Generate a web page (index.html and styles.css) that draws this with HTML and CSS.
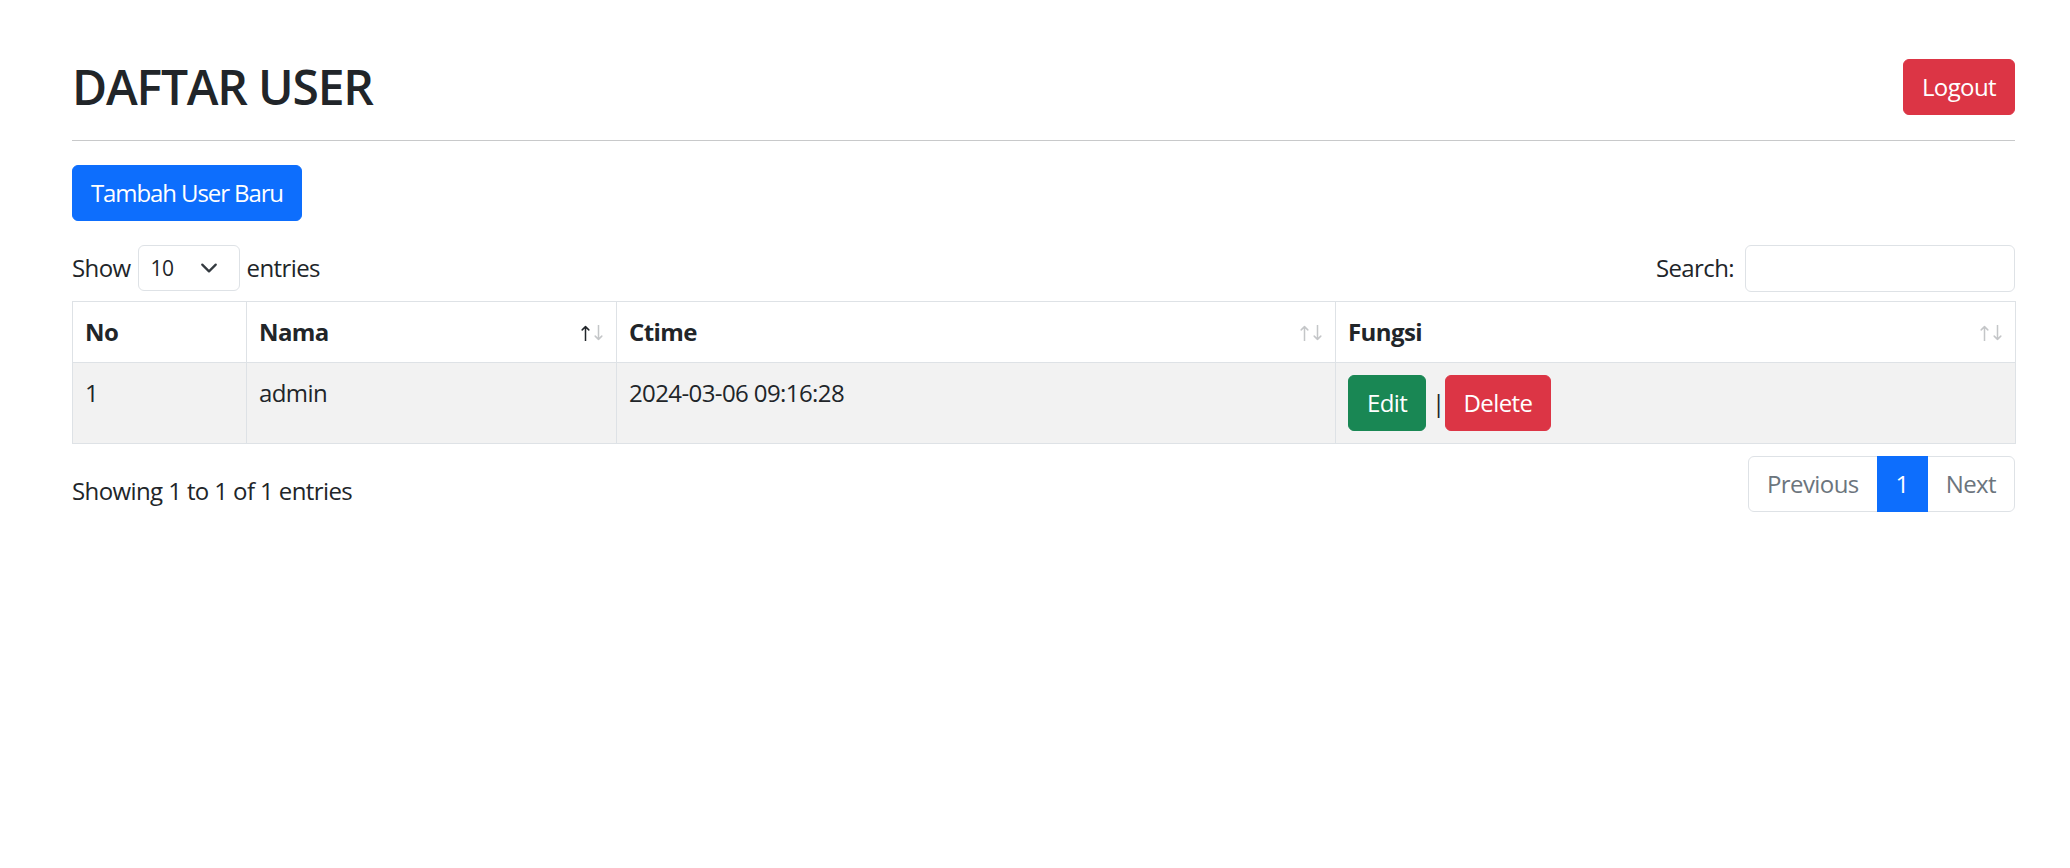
FILE: index.html
```html
<!DOCTYPE html>
<html lang="id">
<head>
<meta charset="utf-8">
<title>Daftar User</title>
<link rel="stylesheet" href="styles.css">
</head>
<body>
<div class="container">
  <div class="page-header">
    <h2 class="page-title">DAFTAR USER</h2>
    <a class="btn btn-danger" href="#">Logout</a>
  </div>
  <hr class="divider">
  <div class="toolbar">
    <a class="btn btn-primary" href="#">Tambah User Baru</a>
  </div>
  <div class="dt-top">
    <label class="dt-length">
      <span>Show</span>
      <span class="select-sm"><span>10</span><svg class="chevron" width="24" height="18" viewBox="0 0 16 16"><path d="m2 5 6 6 6-6" fill="none" stroke="#343a40" stroke-width="2" stroke-linecap="round" stroke-linejoin="round"/></svg></span>
      <span>entries</span>
    </label>
    <label class="dt-search">
      <span>Search:</span>
      <input type="search" class="input-sm">
    </label>
  </div>
  <table class="data-table">
    <colgroup>
      <col class="col-no">
      <col class="col-nama">
      <col class="col-ctime">
      <col class="col-fungsi">
    </colgroup>
    <thead>
      <tr>
        <th><div class="th-inner"><span>No</span></div></th>
        <th><div class="th-inner"><span>Nama</span><svg class="sort sort-asc" width="22" height="16" viewBox="0 0 22 16"><path class="up" d="M4.5 16V1.6M1.2 4.9 4.5 1.6 7.8 4.9"/><path class="down" d="M17.5 0v14.4M14.2 11.1l3.3 3.3 3.3-3.3"/></svg></div></th>
        <th><div class="th-inner"><span>Ctime</span><svg class="sort" width="22" height="16" viewBox="0 0 22 16"><path class="up" d="M4.5 16V1.6M1.2 4.9 4.5 1.6 7.8 4.9"/><path class="down" d="M17.5 0v14.4M14.2 11.1l3.3 3.3 3.3-3.3"/></svg></div></th>
        <th><div class="th-inner"><span>Fungsi</span><svg class="sort" width="22" height="16" viewBox="0 0 22 16"><path class="up" d="M4.5 16V1.6M1.2 4.9 4.5 1.6 7.8 4.9"/><path class="down" d="M17.5 0v14.4M14.2 11.1l3.3 3.3 3.3-3.3"/></svg></div></th>
      </tr>
    </thead>
    <tbody>
      <tr class="odd">
        <td>1</td>
        <td>admin</td>
        <td>2024-03-06 09:16:28</td>
        <td><a class="btn btn-success" href="#">Edit</a> <span class="sep">|</span> <a class="btn btn-danger" href="#">Delete</a></td>
      </tr>
    </tbody>
  </table>
  <div class="dt-bottom">
    <div class="dt-info">Showing 1 to 1 of 1 entries</div>
    <ul class="pagination">
      <li class="page-item disabled"><span class="page-link">Previous</span></li>
      <li class="page-item active"><span class="page-link">1</span></li>
      <li class="page-item disabled"><span class="page-link">Next</span></li>
    </ul>
  </div>
</div>
</body>
</html>
```
FILE: styles.css
```css
* {
  box-sizing: border-box;
}

html,
body {
  margin: 0;
  padding: 0;
  background: #ffffff;
}

body {
  font-family: "Open Sans", "Noto Sans", "DejaVu Sans", sans-serif;
  font-size: 24px;
  line-height: 36px;
  color: #212529;
  letter-spacing: -0.6px;
}

.container {
  width: 1943px;
  margin-left: 72px;
  padding-top: 58px;
}

.page-header {
  display: flex;
  justify-content: space-between;
  align-items: center;
}

.page-title {
  margin: 0;
  font-size: 48px;
  line-height: 57.6px;
  font-weight: 600;
  letter-spacing: -1.2px;
}

.divider {
  margin: 24px 0;
  height: 0;
  border: 0;
  border-top: 1px solid #c8c9ca;
}

.toolbar {
  display: flex;
}

.btn {
  display: inline-block;
  padding: 9px 18px;
  font-size: 24px;
  line-height: 36px;
  border: 1px solid transparent;
  border-radius: 6px;
  color: #ffffff;
  text-decoration: none;
  vertical-align: baseline;
}

.btn-primary {
  background: #0d6efd;
  border-color: #0d6efd;
  letter-spacing: -1.1px;
}

.btn-danger {
  background: #dc3545;
  border-color: #dc3545;
}

.btn-success {
  background: #198754;
  border-color: #198754;
}

.sep {
  display: inline-block;
  width: 7px;
  text-align: center;
  letter-spacing: 0;
}

.dt-top {
  margin-top: 24px;
  display: flex;
  justify-content: space-between;
  align-items: center;
  height: 47px;
}

.dt-length {
  display: inline-flex;
  align-items: center;
  gap: 7px;
}

.select-sm {
  display: inline-flex;
  align-items: center;
  justify-content: space-between;
  width: 102px;
  height: 46px;
  padding: 0 18px 0 12px;
  font-size: 21px;
  border: 1px solid #dee2e6;
  border-radius: 6px;
  background: #ffffff;
}

.chevron {
  display: block;
}

.dt-search {
  display: inline-flex;
  align-items: center;
  gap: 11px;
}

.input-sm {
  width: 270px;
  height: 47px;
  border: 1px solid #dee2e6;
  border-radius: 6px;
  padding: 0 12px;
  font: inherit;
  outline: none;
}

.data-table {
  width: 100%;
  margin-top: 9px;
  border-collapse: collapse;
  table-layout: fixed;
}

.col-no { width: 174px; }
.col-nama { width: 370px; }
.col-ctime { width: 719px; }
.col-fungsi { width: 680px; }

.data-table th,
.data-table td {
  border: 1px solid #dee2e6;
  padding: 12px;
  text-align: left;
  vertical-align: top;
}

.data-table th {
  font-weight: 700;
  background: #ffffff;
}

.data-table td {
  background: #f2f2f2;
}

.th-inner {
  display: flex;
  justify-content: space-between;
  align-items: baseline;
}

.sort {
  display: block;
  margin-right: 1px;
  fill: none;
  stroke-width: 1.5;
  stroke-linecap: round;
  stroke-linejoin: round;
}

.sort .up,
.sort .down {
  stroke: #c4c6c8;
}

.sort-asc .up {
  stroke: #212529;
}

.dt-bottom {
  margin-top: 9px;
  display: flex;
  justify-content: space-between;
  align-items: flex-start;
}

.dt-info {
  padding-top: 20px;
}

.pagination {
  display: flex;
  list-style: none;
  margin: 3px 0 0;
  padding: 0;
}

.page-link {
  display: block;
  padding: 9px 18px;
  line-height: 36px;
  border: 1px solid #dee2e6;
  margin-left: -1px;
  color: #6c757d;
  background: #ffffff;
}

.page-item:first-child .page-link {
  margin-left: 0;
  border-radius: 6px 0 0 6px;
}

.page-item:last-child .page-link {
  border-radius: 0 6px 6px 0;
}

.page-item.active .page-link {
  background: #0d6efd;
  border-color: #0d6efd;
  color: #ffffff;
  position: relative;
}
```
